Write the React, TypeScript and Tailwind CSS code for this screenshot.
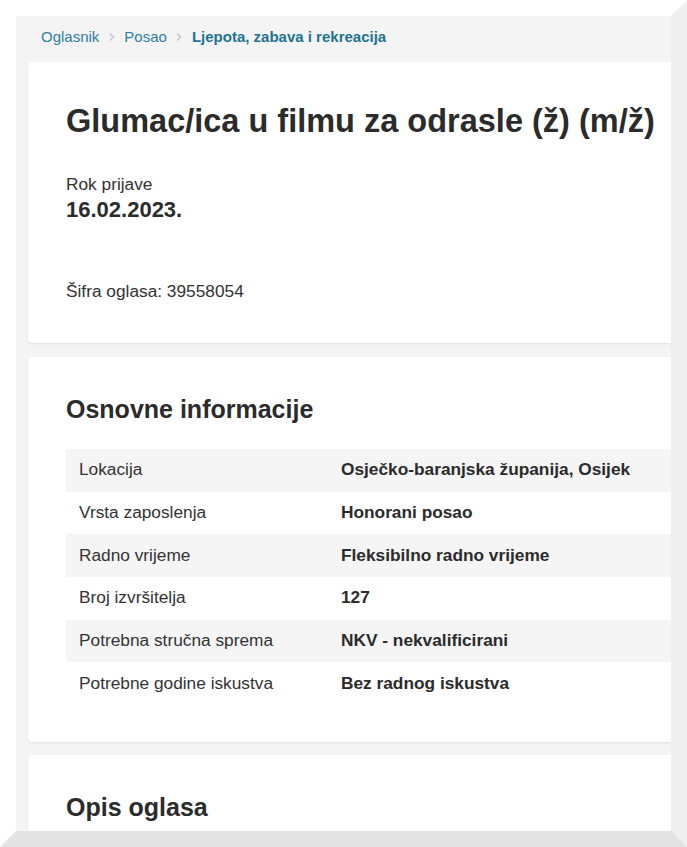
const info = [
  { label: "Lokacija", value: "Osječko-baranjska županija, Osijek" },
  { label: "Vrsta zaposlenja", value: "Honorani posao" },
  { label: "Radno vrijeme", value: "Fleksibilno radno vrijeme" },
  { label: "Broj izvršitelja", value: "127" },
  { label: "Potrebna stručna sprema", value: "NKV - nekvalificirani" },
  { label: "Potrebne godine iskustva", value: "Bez radnog iskustva" },
];

function Chevron() {
  return (
    <svg width="8" height="10" viewBox="0 0 8 10" className="mx-[8.5px]">
      <path d="M2 1.5 L5.5 5 L2 8.5" fill="none" stroke="#c4c9cc" strokeWidth="1.5" />
    </svg>
  );
}

function Card({ children, className = "" }: { children: React.ReactNode; className?: string }) {
  return (
    <div className={`w-[700px] shrink-0 rounded bg-white pl-[38px] shadow-[0_1px_2px_rgba(0,0,0,0.08)] ${className}`}>
      {children}
    </div>
  );
}

export default function App() {
  return (
    <div className="h-[847px] w-[687px] overflow-hidden border-[16px] border-t-white border-l-white border-r-[#efefef] border-b-[#e3e3e3] font-['Liberation_Sans',Arial,sans-serif] text-[#333]">
      <div className="flex h-full flex-col overflow-hidden bg-[#f4f4f4] pl-3">
        <nav className="flex items-center pl-[13px] pt-[11px] pb-[15px] text-[15px] leading-5">
          <span className="text-[#2f7ea3]">Oglasnik</span>
          <Chevron />
          <span className="text-[#2f7ea3]">Posao</span>
          <Chevron />
          <span className="font-bold text-[#1f7392]">Ljepota, zabava i rekreacija</span>
        </nav>

        <Card className="h-[281px] pt-[40px]">
          <h1 className="text-[32.5px] font-bold leading-[38px] text-[#2b2b2b]">
            Glumac/ica u filmu za odrasle (ž) (m/ž)
          </h1>
          <div className="mt-8 text-[17.3px] leading-6">Rok prijave</div>
          <div className="text-[22px] font-bold leading-7 text-[#2b2b2b]">16.02.2023.</div>
          <div className="mt-[55px] text-[17.3px] leading-6">Šifra oglasa: 39558054</div>
        </Card>

        <Card className="mt-[14px] h-[385px] pt-[37px]">
          <h2 className="text-[25px] font-bold leading-[30px] text-[#2b2b2b]">Osnovne informacije</h2>
          <div className="mt-[25px] flex flex-col text-[17.3px]">
            {info.map((row, i) => (
              <div
                key={row.label}
                className={`flex h-[42.7px] items-center ${i % 2 === 0 ? "bg-[#f5f5f5]" : "bg-white"}`}
              >
                <div className="w-[262px] shrink-0 pl-[13px]">{row.label}</div>
                <div className="pl-[13px] font-bold text-[#2b2b2b]">{row.value}</div>
              </div>
            ))}
          </div>
        </Card>

        <Card className="mt-[13px] h-[200px] pt-[37px]">
          <h2 className="text-[25px] font-bold leading-[30px] text-[#2b2b2b]">Opis oglasa</h2>
        </Card>
      </div>
    </div>
  );
}
